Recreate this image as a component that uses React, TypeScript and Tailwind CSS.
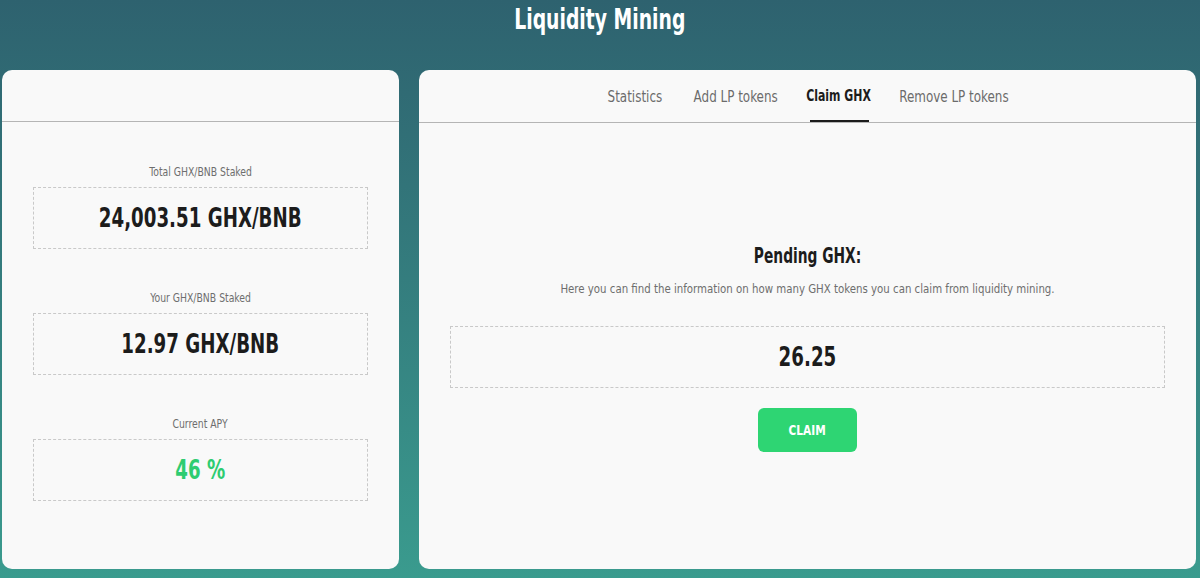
import React from "react";

const font = { fontFamily: '"DejaVu Sans Condensed", "Roboto", sans-serif' };

function Stat({ label, value, green }: { label: string; value: string; green?: boolean }) {
  return (
    <div className="flex flex-col items-center">
      <div className="text-[12px] leading-[14px] text-[#6e6e6e] mb-[8px] whitespace-nowrap">
        <span className="inline-block scale-x-[0.86]">{label}</span>
      </div>
      <div className="w-full h-[62px] border border-dashed border-[#c9c9c9] flex items-center justify-center">
        <span
          className={`inline-block whitespace-nowrap scale-x-[0.75] text-[27px] font-bold ${
            green ? "text-[#2ecc71]" : "text-[#1c1c1c]"
          }`}
        >
          {value}
        </span>
      </div>
    </div>
  );
}

export default function App() {
  const tabs: [string, string][] = [
    ["Statistics", "w-[55px]"],
    ["Add LP tokens", "w-[83px]"],
    ["Claim GHX", "w-[59px]"],
    ["Remove LP tokens", "w-[107px]"],
  ];
  return (
    <div
      style={font}
      className="w-[1200px] h-[578px] overflow-hidden bg-gradient-to-b from-[#2e626f] to-[#3a9b8e] flex flex-col"
    >
      <div className="h-[70px] flex justify-center pt-[3px]">
        <h1 className="text-[29px] font-bold text-white leading-[32px] whitespace-nowrap">
          <span className="inline-block scale-x-[0.72]">Liquidity Mining</span>
        </h1>
      </div>
      <div className="flex gap-[20px] pl-[2px] pr-[4px]">
        <div className="w-[397px] h-[499px] bg-[#f9f9f9] rounded-[10px] flex flex-col">
          <div className="h-[52px] border-b border-[#b5b5b5]" />
          <div className="px-[31px] pt-[43px] flex flex-col gap-[42px]">
            <Stat label="Total GHX/BNB Staked" value="24,003.51 GHX/BNB" />
            <Stat label="Your GHX/BNB Staked" value="12.97 GHX/BNB" />
            <Stat label="Current APY" value="46 %" green />
          </div>
        </div>
        <div className="w-[777px] h-[499px] bg-[#f9f9f9] rounded-[10px] flex flex-col">
          <div className="h-[53px] border-b border-[#b5b5b5] flex justify-center gap-[32px]">
            {tabs.map(([t, w]) => (
              <div
                key={t}
                className={`${w} h-full flex items-center justify-center pt-[2px] text-[16px] whitespace-nowrap ${
                  t === "Claim GHX"
                    ? "text-[#1c1c1c] font-bold border-b-[2px] border-[#1c1c1c] mb-[-1px]"
                    : "text-[#6b6b6b]"
                }`}
              >
                <span className={`inline-block ${t === "Claim GHX" ? "scale-x-[0.76]" : "scale-x-[0.83]"}`}>{t}</span>
              </div>
            ))}
          </div>
          <div className="px-[31px] pt-[120px] flex flex-col items-center">
            <div className="text-[21px] font-bold text-[#1c1c1c] leading-[26px] whitespace-nowrap">
              <span className="inline-block scale-x-[0.73]">Pending GHX:</span>
            </div>
            <div className="text-[12px] text-[#6e6e6e] mt-[11px] whitespace-nowrap">
              <span className="inline-block scale-x-[0.945]">
                Here you can find the information on how many GHX tokens you can claim from liquidity mining.
              </span>
            </div>
            <div className="w-full h-[62px] mt-[28px] border border-dashed border-[#c9c9c9] flex items-center justify-center">
              <span className="inline-block scale-x-[0.75] text-[27px] font-bold text-[#1c1c1c]">26.25</span>
            </div>
            <button className="mt-[20px] w-[99px] h-[44px] rounded-[6px] bg-[#2ed573] text-white text-[14px] font-bold">
              <span className="inline-block scale-x-[0.84]">CLAIM</span>
            </button>
          </div>
        </div>
      </div>
    </div>
  );
}
